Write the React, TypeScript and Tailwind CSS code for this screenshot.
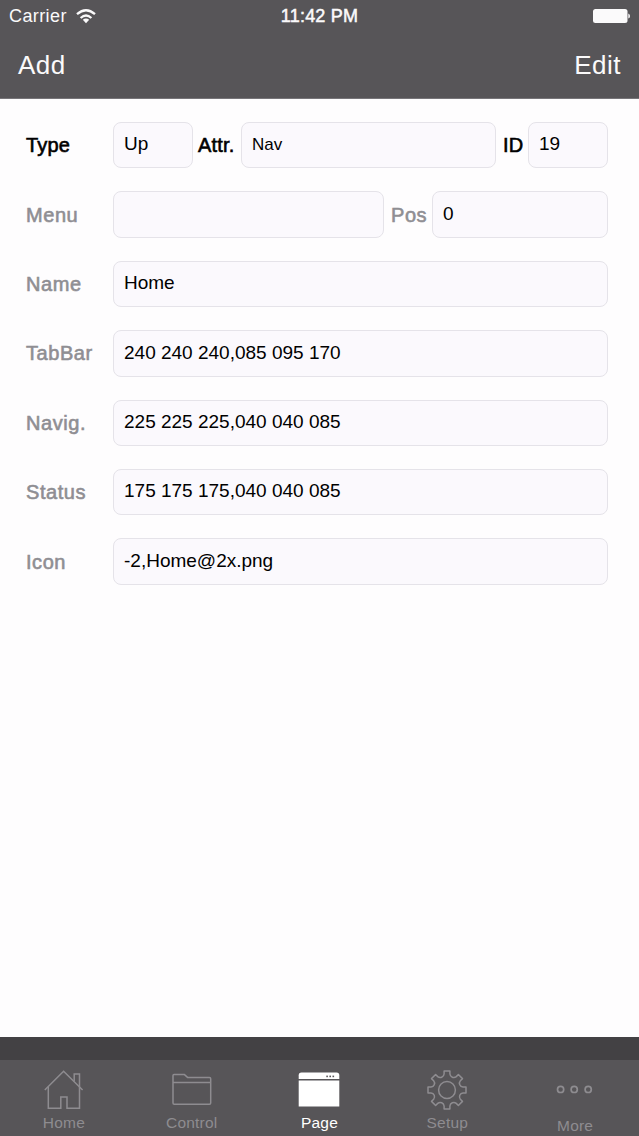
import type { ReactNode } from "react";

function Label({ children, dark, className = "" }: { children: ReactNode; dark?: boolean; className?: string }) {
  return (
    <span
      className={`shrink-0 pt-[1px] text-[20px] leading-[23px] whitespace-nowrap [-webkit-text-stroke:0.6px] ${
        dark ? "tracking-[0.2px] text-black" : "tracking-[0.55px] text-[#8f8e93]"
      } ${className}`}
    >
      {children}
    </span>
  );
}

function Field({ value, small, className = "" }: { value: string; small?: boolean; className?: string }) {
  return (
    <div
      className={`flex h-[46.4px] items-center rounded-lg border border-[#e5e3e9] bg-[#fbf9fd] px-[10px] whitespace-pre text-black ${
        small ? "text-[17px]" : "pb-[1px] text-[19px]"
      } ${className}`}
    >
      {value}
    </div>
  );
}

const rows = [
  { label: "Name", value: "Home" },
  { label: "TabBar", value: "240 240 240,085 095 170" },
  { label: "Navig.", value: "225 225 225,040 040 085" },
  { label: "Status", value: "175 175 175,040 040 085" },
  { label: "Icon", value: "-2,Home@2x.png" },
];

function HomeIcon() {
  return (
    <svg width="40" height="40" viewBox="0 0 40 40" fill="none" stroke="currentColor" strokeWidth="1.5">
      <path d="M.8 20 19.6 1.2 38.6 20" />
      <path d="M4.3 17V38.2H16.8V27H23V38.2H35.5V17" />
      <path d="M30.2 11.5V4H35.5V17" />
    </svg>
  );
}

function FolderIcon() {
  return (
    <svg width="40" height="40" viewBox="0 0 40 40" fill="none" stroke="currentColor" strokeWidth="1.5" strokeLinejoin="round">
      <path d="M1 33V5.4Q1 4.4 2 4.4H12.2L15.8 7.6H37.5Q38.7 7.6 38.7 8.8V33Q38.7 34.2 37.5 34.2H2.2Q1 34.2 1 33Z" />
      <path d="M1 12.5H38.7" />
    </svg>
  );
}

function PageIcon() {
  return (
    <svg width="42" height="40" viewBox="0 0 42 40" fill="currentColor">
      <path d="M.7 9V5.3Q.7 2.5 3.5 2.5H38.5Q41.3 2.5 41.3 5.3V9Z" />
      <path d="M.7 10.4H41.3V36.6H.7Z" />
      <g fill="#575558">
        <rect x="28.3" y="5.6" width="1.6" height="1.6" />
        <rect x="31.4" y="5.6" width="1.6" height="1.6" />
        <rect x="34.5" y="5.6" width="1.6" height="1.6" />
      </g>
    </svg>
  );
}

// eight teeth, one every 45 degrees
function SetupIcon() {
  return (
    <svg width="40" height="40" viewBox="0 0 40 40" fill="none" stroke="currentColor" strokeWidth="1.5" strokeLinejoin="round">
      <path d="M17.1 1H22.9V4A3.9 3.9 0 0 0 29.26 6.64L31.38 4.52L35.48 8.62L33.36 10.74A3.9 3.9 0 0 0 36 17.1H39V22.9H36A3.9 3.9 0 0 0 33.36 29.26L35.48 31.38L31.38 35.48L29.26 33.36A3.9 3.9 0 0 0 22.9 36V39H17.1V36A3.9 3.9 0 0 0 10.74 33.36L8.62 35.48L4.52 31.38L6.64 29.26A3.9 3.9 0 0 0 4 22.9H1V17.1H4A3.9 3.9 0 0 0 6.64 10.74L4.52 8.62L8.62 4.52L10.74 6.64A3.9 3.9 0 0 0 17.1 4Z" />
      <circle cx="20" cy="20" r="8.4" />
    </svg>
  );
}

function MoreIcon() {
  return (
    <svg width="40" height="40" viewBox="0 0 40 40" fill="none" stroke="currentColor" strokeWidth="1.7">
      <circle cx="5.6" cy="19.4" r="3.1" />
      <circle cx="19.2" cy="19.4" r="3.1" />
      <circle cx="33.2" cy="19.4" r="3.1" />
    </svg>
  );
}

const tabs = [
  { name: "Home", icon: <HomeIcon /> },
  { name: "Control", icon: <FolderIcon /> },
  { name: "Page", icon: <PageIcon />, active: true },
  { name: "Setup", icon: <SetupIcon /> },
  { name: "More", icon: <MoreIcon />, low: true },
];

function StatusBar() {
  return (
    <div className="grid h-8 grid-cols-3 items-center pr-[9px] pl-[9px]">
      <div className="flex items-center gap-[9px]">
        <span className="text-[18px] tracking-[0.4px]">Carrier</span>
        <svg width="20" height="15" viewBox="0 0 20 15" fill="none" stroke="currentColor" strokeWidth="2.3">
          <path d="M1 5.2Q10 -2.8 19 5.2" />
          <path d="M4.6 9Q10 4 15.4 9" />
          <path d="M6.8 10.8Q10 8.3 13.2 10.8L10 14.2Z" fill="currentColor" stroke="none" />
        </svg>
      </div>
      <span className="text-center text-[18px] tracking-[0.2px] whitespace-nowrap [-webkit-text-stroke:0.5px]">11:42 PM</span>
      <svg className="justify-self-end" width="38" height="16" viewBox="0 0 38 16" fill="currentColor">
        <rect x="1" y="1" width="34.5" height="14" rx="2.5" />
        <path d="M36.3 5.5Q38 6 38 8T36.3 10.5Z" />
      </svg>
    </div>
  );
}

export default function App() {
  return (
    <div className="flex h-[1136px] w-[639px] flex-col bg-[#fefdfe] font-['Liberation_Sans',Arial,sans-serif]">
      <header className="h-[99px] border-b border-[#777579] bg-[#575558] text-[#fbfafb]">
        <StatusBar />
        <nav className="flex h-[66px] items-center justify-between px-[18px] text-[26px] tracking-[0.5px]">
          <button>Add</button>
          <button>Edit</button>
        </nav>
      </header>

      <main className="flex flex-1 flex-col gap-[23px] pt-[23px] pr-[31px] pl-[26px]">
        <div className="flex items-center">
          <Label dark className="w-[87px]">Type</Label>
          <Field value="Up" className="w-[80px]" />
          <Label dark className="w-[48px] pl-[5px]">Attr.</Label>
          <Field value="Nav" small className="w-[255px]" />
          <Label dark className="w-[32px] pl-[7px]">ID</Label>
          <Field value="19" className="w-[80px]" />
        </div>
        <div className="flex items-center">
          <Label className="w-[87px]">Menu</Label>
          <Field value="" className="w-[271px]" />
          <Label className="w-[48px] pl-[7px]">Pos</Label>
          <Field value="0" className="w-[176px]" />
        </div>
        {rows.map((row) => (
          <div key={row.label} className="flex items-center">
            <Label className="w-[87px]">{row.label}</Label>
            <Field value={row.value} className="flex-1" />
          </div>
        ))}
      </main>

      <footer>
        <div className="h-[23px] bg-[#434144]" />
        <nav className="grid h-[76px] grid-cols-5 bg-[#575558]">
          {tabs.map((tab) => (
            <button
              key={tab.name}
              className={`flex flex-col items-center pt-[10px] ${tab.active ? "text-white" : "text-[#8e8c90]"}`}
            >
              {tab.icon}
              <span className={`text-[15.5px] leading-5 tracking-[0.2px] ${tab.low ? "mt-[6px]" : "mt-[3px]"}`}>
                {tab.name}
              </span>
            </button>
          ))}
        </nav>
      </footer>
    </div>
  );
}
